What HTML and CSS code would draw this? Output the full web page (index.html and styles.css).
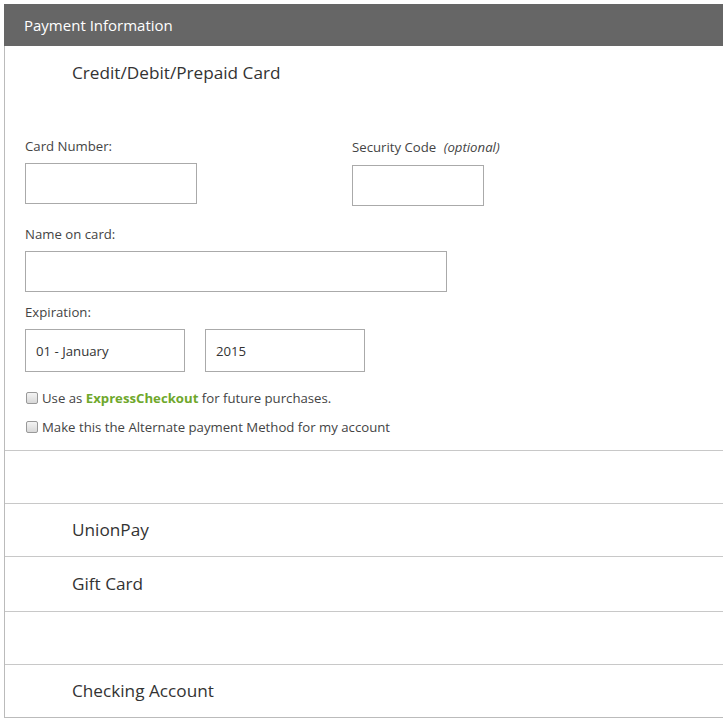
FILE: index.html
```html
<!DOCTYPE html>
<html lang="en">
<head>
    <meta charset="UTF-8">
    <meta name="viewport" content="width=device-width, initial-scale=1.0">
    <title>Payment Information</title>
    <link rel="stylesheet" href="styles.css">
</head>
<body>
    <div class="panel">
        <div class="panel-header">Payment Information</div>

        <div class="panel-body">
            <div class="option open">
                <div class="option-title">Credit/Debit/Prepaid Card</div>

                <form class="card-form">
                    <div class="form-row">
                        <div class="field field-card">
                            <label for="cardNumber">Card Number:</label>
                            <input type="text" id="cardNumber" class="input-card">
                        </div>
                        <div class="field field-cvv">
                            <label for="cvv">Security Code <em>(optional)</em></label>
                            <input type="text" id="cvv" class="input-cvv">
                        </div>
                    </div>

                    <div class="field field-name">
                        <label for="cardName">Name on card:</label>
                        <input type="text" id="cardName" class="input-name">
                    </div>

                    <div class="field field-exp">
                        <label>Expiration:</label>
                        <div class="exp-row">
                            <select class="exp-select">
                                <option>01 - January</option>
                            </select>
                            <select class="exp-select">
                                <option>2015</option>
                            </select>
                        </div>
                    </div>

                    <label class="check-row">
                        <input type="checkbox">
                        <span>Use as <b class="express">ExpressCheckout</b> for future purchases.</span>
                    </label>
                    <label class="check-row">
                        <input type="checkbox">
                        <span>Make this the Alternate payment Method for my account</span>
                    </label>
                </form>
            </div>

            <div class="option"><div class="option-title"></div></div>
            <div class="option"><div class="option-title">UnionPay</div></div>
            <div class="option option-gift"><div class="option-title">Gift Card</div></div>
            <div class="option"><div class="option-title"></div></div>
            <div class="option"><div class="option-title">Checking Account</div></div>
        </div>
    </div>
</body>
</html>
```

FILE: styles.css
```css
body {
    margin: 4px;
    font-family: "Open Sans", "Liberation Sans", Arial, sans-serif;
    color: #444;
    background-color: #fff;
}

.panel {
    width: 720px;
}

.panel-header {
    height: 42px;
    line-height: 42px;
    padding-left: 20px;
    background-color: #666;
    color: #fff;
    font-size: 15px;
}

.panel-body {
    border: 1px solid #bbb;
    border-top: none;
}

.option {
    border-top: 1px solid #c8c8c8;
}

.option:first-child {
    border-top: none;
}

.option-title {
    height: 52px;
    line-height: 52px;
    padding-left: 67px;
    font-size: 17.2px;
    color: #333;
}

.option.open .option-title {
    height: 54px;
    line-height: 54px;
}

.option-gift .option-title {
    height: 54px;
    line-height: 54px;
}

.card-form {
    padding: 37px 20px 13px;
    font-size: 13.2px;
}

.form-row {
    display: flex;
}

.field label {
    display: block;
    line-height: 18px;
    margin-bottom: 8px;
}

.field input,
.exp-select {
    box-sizing: border-box;
    height: 41px;
    border: 1px solid #aaa;
    border-radius: 0;
    background-color: #fff;
    font-family: inherit;
    font-size: 13.2px;
    color: #333;
    outline: none;
}

.field-card {
    width: 327px;
}

.input-card {
    width: 172px;
}

.field-cvv label {
    margin-top: 1px;
}

.field-cvv em {
    margin-left: 4px;
}

.input-cvv {
    width: 132px;
    margin-top: 1px;
}

.field-name {
    margin-top: 19px;
}

.input-name {
    width: 422px;
}

.field-exp {
    margin-top: 11px;
}

.exp-row {
    display: flex;
    gap: 20px;
}

.exp-select {
    width: 160px;
    height: 43px;
    padding: 0 10px;
    appearance: none;
    -webkit-appearance: none;
}

.check-row {
    display: flex;
    align-items: center;
    height: 20px;
    margin-top: 9px;
}

.check-row:first-of-type {
    margin-top: 16px;
}

.check-row input {
    appearance: none;
    -webkit-appearance: none;
    box-sizing: border-box;
    width: 12px;
    height: 12px;
    margin: 0 4px 0 1px;
    border: 1px solid #999;
    border-radius: 2px;
    background: linear-gradient(#f4f4f4, #d8d8d8);
}

.express {
    color: #6fa82c;
    font-weight: bold;
}
```
